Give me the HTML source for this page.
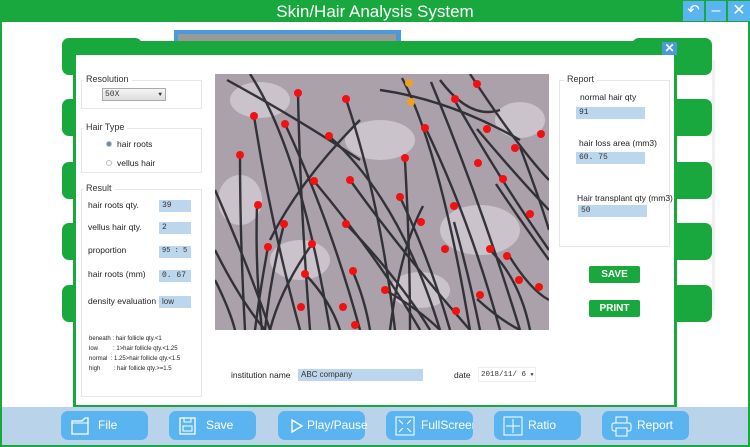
<!DOCTYPE html>
<html><head><meta charset="utf-8"><style>
*{margin:0;padding:0;box-sizing:border-box}
body{width:750px;height:447px;overflow:hidden;position:relative;background:#fff;font-family:"Liberation Sans",sans-serif;color:#333}
.a{position:absolute}
.g{background:#18a83e}
.tab{position:absolute;background:#18a83e;border-radius:7px;width:80px;height:37px}
.fs{position:absolute;border:1px solid #e6e6e6;}
.lg{position:absolute;background:#fff;font-size:9px;padding:0 3px;color:#333}
.t{position:absolute;font-size:8.5px;color:#222;white-space:nowrap}
.in{position:absolute;background:#bcd6ee;font-size:8px;color:#333;padding-left:3px;line-height:11px;height:12px;font-family:"Liberation Mono",monospace;white-space:nowrap}
.bb{position:absolute;top:411px;width:87px;height:29px;background:#5ab4f0;border-radius:7px;color:#fff;font-size:12px;line-height:29px}
.bb span{position:absolute;left:37px}
.bb svg{position:absolute;left:9px;top:5px}
.gb{position:absolute;background:#18a83e;color:#fff;font-size:10px;font-weight:bold;text-align:center;border-radius:2px}
</style></head><body>
<div class="a" style="left:0;top:0;width:750px;height:447px;border:2px solid #18a83e"></div>
<div class="a g" style="left:0;top:0;width:750px;height:22px"></div>
<div class="a" style="left:0;top:0;width:750px;height:22px;color:#fff;font-size:17px;text-align:center;line-height:23px">Skin/Hair Analysis System</div>
<div class="a" style="left:683px;top:1px;width:21px;height:20px;background:#5ab4f0;color:#fff;font-size:15px;text-align:center;line-height:20px">&#8630;</div>
<div class="a" style="left:706px;top:1px;width:20px;height:20px;background:#5ab4f0;color:#fff;font-size:16px;text-align:center;line-height:19px">&#8211;</div>
<div class="a" style="left:728px;top:1px;width:22px;height:20px;background:#5ab4f0;color:#fff;font-size:16px;text-align:center;line-height:20px">&#10005;</div>
<div class="a" style="left:174px;top:30px;width:227px;height:12px;background:#4a9ad8"></div>
<div class="a" style="left:178px;top:34px;width:218px;height:8px;background:#999"></div>
<div class="tab" style="left:62px;top:38px"></div><div class="tab" style="left:62px;top:99px"></div><div class="tab" style="left:62px;top:162px"></div><div class="tab" style="left:62px;top:223px"></div><div class="tab" style="left:62px;top:285px"></div>
<div class="tab" style="left:632px;top:38px"></div><div class="tab" style="left:632px;top:99px"></div><div class="tab" style="left:632px;top:162px"></div><div class="tab" style="left:632px;top:223px"></div><div class="tab" style="left:632px;top:285px"></div>
<div class="a" style="left:712px;top:22px;width:36px;height:380px;background:#fff"></div>
<div class="a" style="left:712px;top:60px;width:3px;height:250px;background:#f0f0f0"></div>
<!-- dialog -->
<div class="a g" style="left:73px;top:41px;width:604px;height:366px"></div>
<div class="a" style="left:76px;top:55px;width:598px;height:350px;background:#fff"></div>
<div class="a" style="left:662px;top:42px;width:15px;height:13px;background:#4a9ad8;color:#fff;font-size:12px;font-weight:bold;text-align:center;line-height:13px">&#10005;</div>
<!-- left panel -->
<div class="fs" style="left:81px;top:80px;width:121px;height:29px"></div><div class="lg" style="left:83px;top:74px">Resolution</div>
<div class="a" style="left:102px;top:88px;width:64px;height:13px;border:1px solid #aaa;background:linear-gradient(#f4f4f4,#ddd);font-size:8px;line-height:11px;padding-left:2px;font-family:'Liberation Mono',monospace">50X<span style="position:absolute;right:3px;font-size:6px">&#9660;</span></div>
<div class="fs" style="left:81px;top:128px;width:121px;height:45px"></div><div class="lg" style="left:83px;top:122px">Hair Type</div>
<div class="a" style="left:106px;top:141px;width:6px;height:6px;border-radius:50%;background:#6a8aa8;border:1px solid #bbb"></div><div class="t" style="left:117px;top:139px">hair roots</div>
<div class="a" style="left:106px;top:160px;width:6px;height:6px;border-radius:50%;border:1px solid #bbb"></div><div class="t" style="left:117px;top:158px">vellus hair</div>
<div class="fs" style="left:81px;top:189px;width:121px;height:208px"></div><div class="lg" style="left:83px;top:183px">Result</div>
<div class="t" style="left:88px;top:200px">hair roots qty.</div><div class="in" style="left:159px;top:200px;width:32px">39</div>
<div class="t" style="left:88px;top:222px">vellus hair qty.</div><div class="in" style="left:159px;top:222px;width:32px">2</div>
<div class="t" style="left:88px;top:245px">proportion</div><div class="in" style="left:159px;top:246px;width:32px;font-size:7px">95 : 5</div>
<div class="t" style="left:88px;top:269px">hair roots (mm)</div><div class="in" style="left:159px;top:270px;width:32px">0. 67</div>
<div class="t" style="left:88px;top:296px">density evaluation</div><div class="in" style="left:159px;top:296px;width:32px;font-family:'Liberation Sans'">low</div>
<div class="t" style="left:89px;top:334px;font-size:6px;line-height:10px">beneath : hair follicle qty.&lt;1<br>low&nbsp;&nbsp;&nbsp;&nbsp;&nbsp;&nbsp;&nbsp;&nbsp;&nbsp;: 1&gt;hair follicle qty.&lt;1.25<br>normal&nbsp;&nbsp;: 1.25&gt;hair follicle qty.&lt;1.5<br>high&nbsp;&nbsp;&nbsp;&nbsp;&nbsp;&nbsp;&nbsp;&nbsp;: hair follicle qty.&gt;=1.5</div>
<!-- image -->
<svg class="a" style="left:215px;top:74px" width="334" height="256" viewBox="215 74 334 256">
<rect x="215" y="74" width="334" height="256" fill="#aaa1ab"/>
<g fill="#d8d2da" opacity=".7"><ellipse cx="260" cy="100" rx="30" ry="18"/><ellipse cx="380" cy="140" rx="35" ry="20"/><ellipse cx="480" cy="230" rx="40" ry="25"/><ellipse cx="300" cy="260" rx="30" ry="20"/><ellipse cx="520" cy="120" rx="25" ry="18"/><ellipse cx="420" cy="290" rx="30" ry="18"/><ellipse cx="240" cy="200" rx="22" ry="25"/></g>
<g stroke="#25252a" stroke-width="2.4" fill="none" opacity=".9">
<path d="M298 93 Q300 200 310 330"/><path d="M346 99 Q380 200 395 330"/><path d="M254 116 Q270 220 300 330"/><path d="M285 124 Q330 220 360 330"/><path d="M329 136 Q400 200 440 330"/><path d="M240 155 Q240 240 245 330"/><path d="M314 181 Q380 260 420 330"/><path d="M350 180 Q400 250 470 330"/><path d="M257 205 Q255 270 262 330"/><path d="M284 224 Q270 280 265 330"/><path d="M346 224 Q400 280 430 330"/><path d="M268 247 Q260 290 255 330"/><path d="M312 244 Q280 290 270 330"/><path d="M305 274 Q330 300 340 330"/><path d="M353 272 Q365 300 370 330"/><path d="M385 290 Q420 310 440 330"/><path d="M405 161 Q410 250 410 330"/><path d="M400 197 Q430 260 450 330"/><path d="M425 127 Q470 220 500 330"/><path d="M431 82 Q480 200 520 330"/><path d="M454 99 Q500 180 549 250"/><path d="M477 129 Q520 180 549 210"/><path d="M454 222 Q470 280 480 330"/><path d="M490 250 Q520 280 530 330"/><path d="M508 254 Q530 290 549 300"/><path d="M520 147 Q540 200 549 230"/><path d="M496 184 Q520 220 549 260"/><path d="M423 206 Q400 250 390 330"/><path d="M477 299 Q500 320 520 330"/><path d="M215 190 Q250 270 270 330"/><path d="M215 250 Q240 300 265 330"/><path d="M227 80 Q300 120 360 160"/><path d="M380 90 Q450 100 520 140"/><path d="M402 78 Q440 150 470 330"/><path d="M360 120 Q300 180 270 240"/><path d="M440 80 Q470 120 500 110"/><path d="M250 74 Q300 150 330 330"/><path d="M470 74 Q520 150 549 180"/><path d="M215 280 Q230 310 235 330"/></g>
<g fill="#f21010">
<circle cx="298" cy="93" r="4"/><circle cx="346" cy="99" r="4"/><circle cx="254" cy="116" r="4"/><circle cx="285" cy="124" r="4"/><circle cx="329" cy="136" r="4"/><circle cx="240" cy="155" r="4"/><circle cx="314" cy="181" r="4"/><circle cx="350" cy="180" r="4"/><circle cx="258" cy="205" r="4"/><circle cx="284" cy="224" r="4"/><circle cx="346" cy="224" r="4"/><circle cx="268" cy="247" r="4"/><circle cx="312" cy="244" r="4"/><circle cx="305" cy="274" r="4"/><circle cx="353" cy="271" r="4"/><circle cx="301" cy="307" r="4"/><circle cx="343" cy="307" r="4"/><circle cx="355" cy="325" r="4"/><circle cx="385" cy="290" r="4"/><circle cx="405" cy="158" r="4"/><circle cx="400" cy="197" r="4"/><circle cx="421" cy="222" r="4"/><circle cx="425" cy="128" r="4"/><circle cx="455" cy="99" r="4"/><circle cx="477" cy="84" r="4"/><circle cx="487" cy="129" r="4"/><circle cx="541" cy="134" r="4"/><circle cx="515" cy="148" r="4"/><circle cx="478" cy="163" r="4"/><circle cx="503" cy="179" r="4"/><circle cx="454" cy="206" r="4"/><circle cx="530" cy="214" r="4"/><circle cx="445" cy="249" r="4"/><circle cx="490" cy="249" r="4"/><circle cx="507" cy="256" r="4"/><circle cx="519" cy="280" r="4"/><circle cx="539" cy="287" r="4"/><circle cx="480" cy="295" r="4"/><circle cx="456" cy="311" r="4"/></g>
<g fill="#f0a020"><circle cx="409" cy="83" r="4"/><circle cx="411" cy="102" r="4"/></g>
</svg>
<div class="t" style="left:231px;top:370px">institution name</div><div class="in" style="left:298px;top:369px;width:125px;font-family:'Liberation Sans'">ABC company</div>
<div class="t" style="left:454px;top:370px">date</div>
<div class="a" style="left:478px;top:367px;width:58px;height:15px;border:1px solid #eee;font-size:7.5px;line-height:14px;padding-left:2px;font-family:'Liberation Mono',monospace;white-space:nowrap">2018/11/ 6 <span style="font-size:5px">&#9660;</span></div>
<!-- right panel -->
<div class="fs" style="left:559px;top:80px;width:111px;height:167px"></div><div class="lg" style="left:564px;top:74px">Report</div>
<div class="t" style="left:580px;top:92px">normal hair qty</div><div class="in" style="left:576px;top:107px;width:69px">91</div>
<div class="t" style="left:579px;top:138px">hair loss area (mm3)</div><div class="in" style="left:576px;top:152px;width:69px">60. 75</div>
<div class="t" style="left:577px;top:193px">Hair transplant qty (mm3)</div><div class="in" style="left:578px;top:205px;width:69px">50</div>
<div class="gb" style="left:589px;top:266px;width:51px;height:17px;line-height:17px">SAVE</div>
<div class="gb" style="left:589px;top:300px;width:51px;height:17px;line-height:17px">PRINT</div>
<!-- bottom bar -->
<div class="a" style="left:2px;top:407px;width:746px;height:38px;background:#b9d3ea"></div>
<div class="a" style="left:0;top:445px;width:750px;height:2px;background:#18a83e"></div>
<div class="bb" style="left:61px"><svg width="20" height="20"><path d="M2 5h10l3-3h3v16H2z" stroke="#fff" fill="none" stroke-width="1.3"/><path d="M2 7h16" stroke="#fff"/></svg><span>File</span></div>
<div class="bb" style="left:169px"><svg width="20" height="20"><rect x="2" y="2" width="15" height="16" stroke="#fff" fill="none" stroke-width="1.3"/><rect x="5" y="10" width="9" height="5" stroke="#fff" fill="none"/><path d="M6 2v4h7V2" stroke="#fff" fill="none"/></svg><span>Save</span></div>
<div class="bb" style="left:278px"><svg width="20" height="20"><path d="M5 4l10 6-10 6z" stroke="#fff" fill="none" stroke-width="1.4"/></svg><span style="left:29px">Play/Pause</span></div>
<div class="bb" style="left:386px;overflow:hidden"><svg width="20" height="20"><rect x="1" y="1" width="18" height="18" stroke="#fff" fill="none"/><path d="M4 4l4 4M16 4l-4 4M4 16l4-4M16 16l-4-4" stroke="#fff"/></svg><span style="left:35px">FullScreen</span></div>
<div class="bb" style="left:494px"><svg width="20" height="20"><rect x="1" y="1" width="18" height="18" stroke="#fff" fill="none"/><path d="M10 3v14M3 10h14" stroke="#fff"/></svg><span style="left:34px">Ratio</span></div>
<div class="bb" style="left:602px"><svg width="22" height="22"><rect x="5" y="1" width="11" height="6" stroke="#fff" fill="none"/><rect x="1" y="7" width="19" height="8" rx="2" stroke="#fff" fill="none"/><rect x="5" y="12" width="11" height="8" stroke="#fff" fill="#5ab4f0"/></svg><span style="left:35px">Report</span></div>
</body></html>
